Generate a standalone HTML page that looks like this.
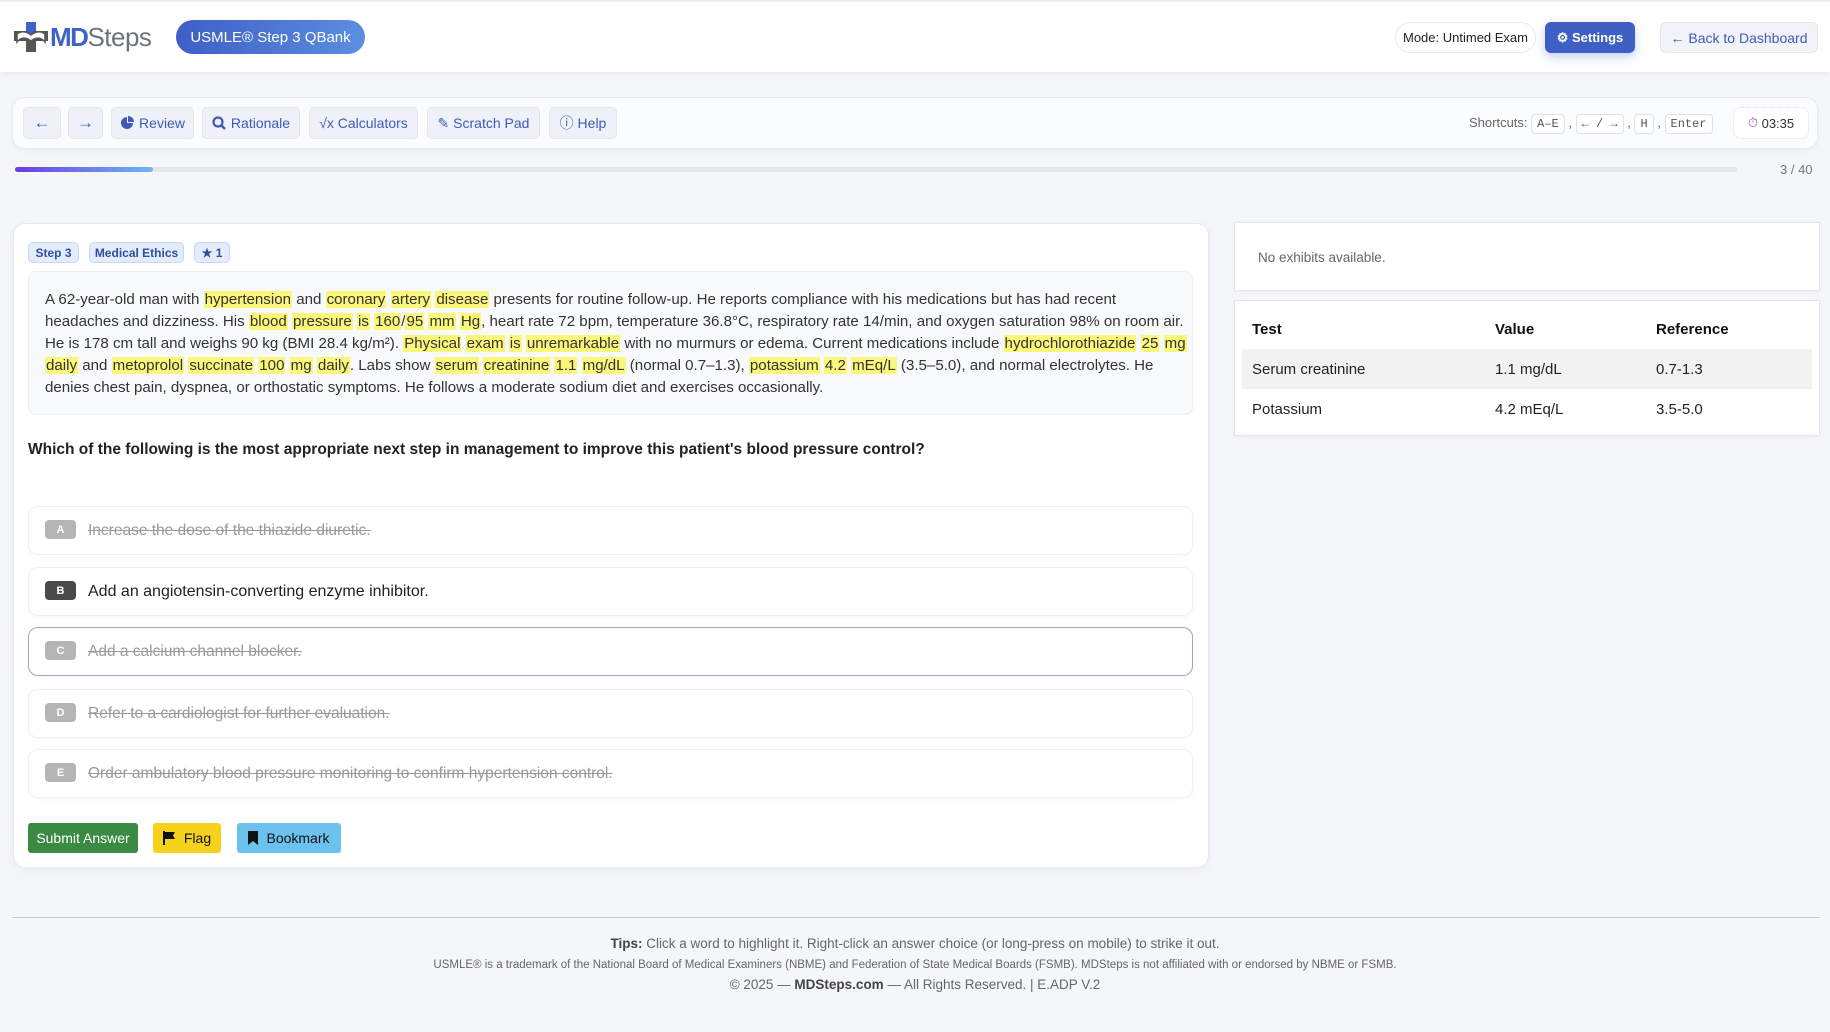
<!DOCTYPE html>
<html><head><meta charset="utf-8">
<style>
*{box-sizing:border-box;margin:0;padding:0}
body{width:1830px;height:1032px;background:#f4f6fa;font-family:"Liberation Sans",sans-serif;color:#2a2f36;position:relative;overflow:hidden}
.abs{position:absolute}
.header{left:0;top:0;width:1830px;height:72px;background:#fff;box-shadow:0 2px 6px rgba(0,0,0,.06);border-top:2px solid #eceef2}
.logo{left:12px;top:20px;height:34px;display:flex;align-items:center}
.logo .md{font-size:26px;font-weight:bold;color:#3f63c9;letter-spacing:-1.5px}
.logo .st{font-size:26px;color:#6e737a;letter-spacing:-0.5px}
.badge{left:176px;top:20px;width:189px;height:34px;border-radius:17px;background:linear-gradient(90deg,#3e5fc6,#5b8ee0);color:#fff;font-size:15px;display:flex;align-items:center;justify-content:center}
.pill{top:22px;height:31px;display:flex;align-items:center;justify-content:center;font-size:13px;border-radius:6px}
.toolbar{left:12px;top:97px;width:1806px;height:52px;background:#fbfcfe;border:1px solid #e8ebf1;border-radius:12px;box-shadow:0 2px 6px rgba(0,0,0,.04)}
.tb{top:107px;height:32px;border-radius:5px;background:#eef1f7;border:1px solid #e2e6ee;color:#3f5bb8;font-size:14px;display:flex;align-items:center;justify-content:center;gap:5px}
.kbd{display:inline-block;border:1px solid #dde1e8;border-radius:4px;background:#fff;font-family:"Liberation Mono",monospace;font-size:12px;padding:2px 5px;color:#555}
.card{background:#fff;border:1px solid #e6e9ef;border-radius:12px;box-shadow:0 2px 8px rgba(0,0,0,.05)}
.tag{top:242px;height:21px;border-radius:5px;background:#e3ecfa;border:1px solid #c9d7f0;color:#2f4fa0;font-size:12px;font-weight:bold;display:flex;align-items:center;justify-content:center}
.stem{left:28px;top:271px;width:1165px;height:144px;background:#f8f9fb;border:1px solid #eceff3;border-radius:8px;padding:17px 16px;font-size:15.1px;line-height:22px;color:#333}
.stem div{white-space:nowrap}
.h{background:#fbf77a;padding:0 1px}
.opt{left:28px;width:1165px;height:49px;border-radius:10px;background:#fff;border:1px solid #eef0f4;box-shadow:0 1px 4px rgba(0,0,0,.04)}
.opt .l{position:absolute;left:16px;top:13px;width:31px;height:19px;border-radius:4px;background:#b5b5b5;color:#fff;font-size:11px;font-weight:bold;display:flex;align-items:center;justify-content:center}
.opt .t{position:absolute;left:59px;top:15px;font-size:15.5px;color:#999;text-decoration:line-through;white-space:nowrap}
.btn{top:823px;height:30px;border-radius:3px;font-size:14px;display:flex;align-items:center;justify-content:center;gap:8px}
th,td{text-align:left;font-size:15px;height:40px;padding-left:10px}
th{font-weight:bold;color:#111}
td{color:#222}
.foot{left:0;width:1830px;text-align:center;color:#666}
</style></head><body>
<div class="abs header"></div>
<div class="abs logo">
<svg width="38" height="34" viewBox="0 0 38 34"><rect x="14" y="2" width="10" height="30" fill="#555"/><rect x="2" y="11" width="34" height="10" fill="#555"/><path d="M14 2h10v8l-5 4-5-4z" fill="#3f63c9"/><path d="M5 22c4-5 9-5 14-1 5-4 10-4 14 1v-8c-4-3-9-3-14 1-5-4-10-4-14-1z" fill="#fff" stroke="#555" stroke-width="1.5"/></svg>
<span class="md">MD</span><span class="st">Steps</span></div>
<div class="abs badge">USMLE® Step 3 QBank</div>
<div class="abs pill" style="left:1395px;width:141px;border:1px solid #e6e8ec;border-radius:16px;background:#fff;color:#222">Mode: Untimed Exam</div>
<div class="abs pill" style="left:1545px;width:90px;background:#3f5fc4;color:#fff;font-weight:bold;box-shadow:0 4px 10px rgba(63,95,196,.3)">⚙ Settings</div>
<div class="abs pill" style="left:1660px;width:158px;background:#f1f3f8;border:1px solid #e3e6ed;color:#3f5bb8;font-size:14px">← Back to Dashboard</div>

<div class="abs toolbar"></div>
<div class="abs tb" style="left:23px;width:38px;font-size:17px">←</div>
<div class="abs tb" style="left:68px;width:35px;font-size:17px">→</div>
<div class="abs tb" style="left:111px;width:83px"><svg width="14" height="14" viewBox="0 0 14 14"><path d="M7 1a6 6 0 1 0 6 6H7z" fill="#3f5bb8"/><path d="M8 0v6h6A6 6 0 0 0 8 0z" fill="#3f5bb8"/></svg>Review</div>
<div class="abs tb" style="left:202px;width:98px"><svg width="14" height="14" viewBox="0 0 14 14"><circle cx="6" cy="6" r="4.5" fill="none" stroke="#3f5bb8" stroke-width="2.2"/><path d="M9 9l4 4" stroke="#3f5bb8" stroke-width="2.5"/></svg>Rationale</div>
<div class="abs tb" style="left:309px;width:109px">√x Calculators</div>
<div class="abs tb" style="left:427px;width:113px">✎ Scratch Pad</div>
<div class="abs tb" style="left:549px;width:68px">ⓘ Help</div>
<div class="abs" style="left:1469px;top:114px;font-size:13px;color:#666">Shortcuts: <span class="kbd">A–E</span> , <span class="kbd">← / →</span> , <span class="kbd">H</span> , <span class="kbd">Enter</span></div>
<div class="abs" style="left:1733px;top:107px;width:76px;height:32px;border:1px dotted #dde;border-radius:8px;background:#fff;font-size:13px;display:flex;align-items:center;justify-content:center;color:#333"><span style="color:#a050b0">⏱</span>&nbsp;03:35</div>

<div class="abs" style="left:15px;top:167px;width:1722px;height:5px;border-radius:3px;background:#e4e6ea"></div>
<div class="abs" style="left:15px;top:167px;width:138px;height:5px;border-radius:3px;background:linear-gradient(90deg,#6a3ee0,#70b6f0)"></div>
<div class="abs" style="left:1780px;top:162px;font-size:13px;color:#777">3 / 40</div>

<div class="abs card" style="left:13px;top:223px;width:1196px;height:645px"></div>
<div class="abs tag" style="left:28px;width:51px">Step 3</div>
<div class="abs tag" style="left:89px;width:95px">Medical Ethics</div>
<div class="abs tag" style="left:194px;width:36px">★ 1</div>
<div class="abs stem">
<div>A 62-year-old man with <span class="h">hypertension</span> and <span class="h">coronary</span> <span class="h">artery</span> <span class="h">disease</span> presents for routine follow-up. He reports compliance with his medications but has had recent</div>
<div>headaches and dizziness. His <span class="h">blood</span> <span class="h">pressure</span> <span class="h">is</span> <span class="h">160</span>/<span class="h">95</span> <span class="h">mm</span> <span class="h">Hg</span>, heart rate 72 bpm, temperature 36.8°C, respiratory rate 14/min, and oxygen saturation 98% on room air.</div>
<div>He is 178 cm tall and weighs 90 kg (BMI 28.4 kg/m²). <span class="h">Physical</span> <span class="h">exam</span> <span class="h">is</span> <span class="h">unremarkable</span> with no murmurs or edema. Current medications include <span class="h">hydrochlorothiazide</span> <span class="h">25</span> <span class="h">mg</span></div>
<div><span class="h">daily</span> and <span class="h">metoprolol</span> <span class="h">succinate</span> <span class="h">100</span> <span class="h">mg</span> <span class="h">daily</span>. Labs show <span class="h">serum</span> <span class="h">creatinine</span> <span class="h">1.1</span> <span class="h">mg/dL</span> (normal 0.7–1.3), <span class="h">potassium</span> <span class="h">4.2</span> <span class="h">mEq/L</span> (3.5–5.0), and normal electrolytes. He</div>
<div>denies chest pain, dyspnea, or orthostatic symptoms. He follows a moderate sodium diet and exercises occasionally.</div>
</div>
<div class="abs" style="left:28px;top:441px;font-size:15.5px;font-weight:bold;color:#222;white-space:nowrap">Which of the following is the most appropriate next step in management to improve this patient's blood pressure control?</div>

<div class="abs opt" style="top:506px"><div class="l">A</div><div class="t">Increase the dose of the thiazide diuretic.</div></div>
<div class="abs opt" style="top:567px"><div class="l" style="background:#4a4a4a">B</div><div class="t" style="color:#222;text-decoration:none;font-size:16px">Add an angiotensin-converting enzyme inhibitor.</div></div>
<div class="abs opt" style="top:627px;border:1.5px solid #9aa8c8"><div class="l">C</div><div class="t">Add a calcium channel blocker.</div></div>
<div class="abs opt" style="top:689px"><div class="l">D</div><div class="t">Refer to a cardiologist for further evaluation.</div></div>
<div class="abs opt" style="top:749px"><div class="l">E</div><div class="t">Order ambulatory blood pressure monitoring to confirm hypertension control.</div></div>

<div class="abs btn" style="left:28px;width:110px;background:#3a8a44;color:#fff">Submit Answer</div>
<div class="abs btn" style="left:153px;width:68px;background:#f6d21c;color:#111"><svg width="13" height="14" viewBox="0 0 13 14"><path d="M1 0v14" stroke="#111" stroke-width="2"/><path d="M2 1h10l-2 3.5 2 3.5H2z" fill="#111"/></svg> Flag</div>
<div class="abs btn" style="left:237px;width:104px;background:#6cc2ef;color:#111"><svg width="10" height="14" viewBox="0 0 10 14"><path d="M0 0h10v14l-5-4-5 4z" fill="#111"/></svg> Bookmark</div>

<div class="abs" style="left:1234px;top:222px;width:586px;height:69px;background:#fff;border:1px solid #e4e6ea;box-shadow:0 1px 3px rgba(0,0,0,.05)"></div>
<div class="abs" style="left:1258px;top:250px;font-size:13.5px;color:#666">No exhibits available.</div>
<div class="abs" style="left:1234px;top:300px;width:586px;height:136px;background:#fff;border:1px solid #e4e6ea;box-shadow:0 1px 3px rgba(0,0,0,.05);padding:8px 7px">
<table style="width:100%;border-collapse:collapse">
<tr><th style="width:243px">Test</th><th style="width:161px">Value</th><th>Reference</th></tr>
<tr style="background:#f2f2f2"><td>Serum creatinine</td><td>1.1 mg/dL</td><td>0.7-1.3</td></tr>
<tr><td>Potassium</td><td>4.2 mEq/L</td><td>3.5-5.0</td></tr>
</table></div>

<div class="abs" style="left:12px;top:917px;width:1808px;height:1px;background:#c9ccd2"></div>
<div class="abs foot" style="top:936px;font-size:13.5px"><b style="color:#444">Tips:</b> Click a word to highlight it. Right-click an answer choice (or long-press on mobile) to strike it out.</div>
<div class="abs foot" style="top:959px;font-size:11.5px">USMLE® is a trademark of the National Board of Medical Examiners (NBME) and Federation of State Medical Boards (FSMB). MDSteps is not affiliated with or endorsed by NBME or FSMB.</div>
<div class="abs foot" style="top:977px;font-size:13.5px">© 2025 — <b style="color:#444">MDSteps.com</b> — All Rights Reserved. | E.ADP V.2</div>
</body></html>
